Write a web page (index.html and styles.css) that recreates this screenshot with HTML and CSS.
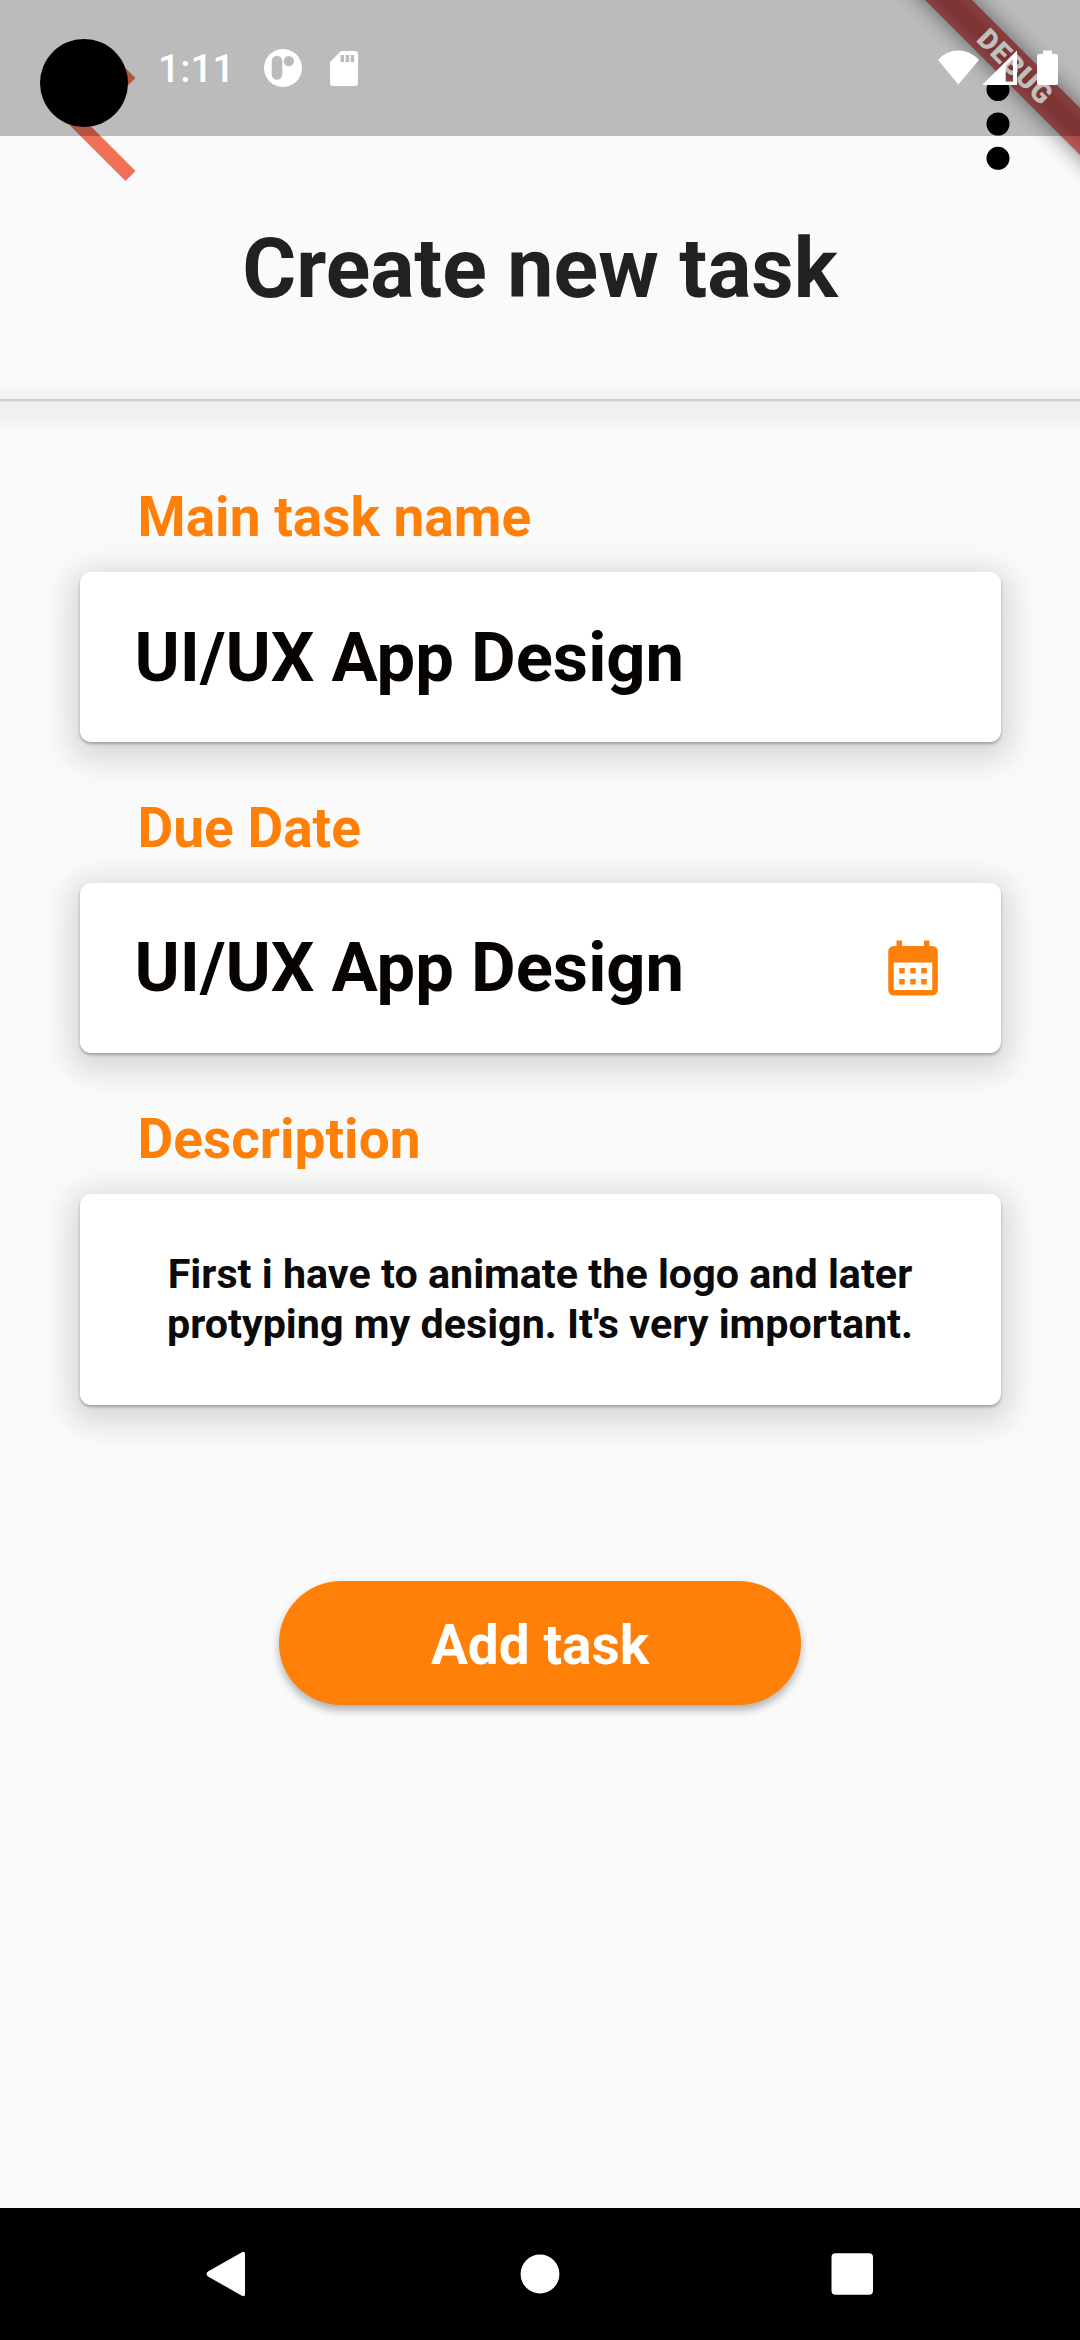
FILE: index.html
```html
<!DOCTYPE html>
<html lang="en">
<head>
<meta charset="utf-8">
<title>Create new task</title>
<link rel="stylesheet" href="styles.css">
</head>
<body>
<div class="screen">
  <header class="app-bar">
    <div class="app-bar-actions">
      <svg class="back" width="68" height="114" viewBox="0 0 68 114"><path d="M57.500 0 67.500 10 21 56.500 67.500 103 57.500 113 1 56.500z" fill="#ef7057"/></svg>
      <svg class="more" width="24" height="92" viewBox="0 0 24 92"><circle cx="12" cy="11.500" r="11.500"/><circle cx="12" cy="46" r="11.500"/><circle cx="12" cy="80.300" r="11.500"/></svg>
    </div>
    <h1 class="title"><span>Create new task</span></h1>
  </header>
  <div class="divider"></div>

  <main class="form">
    <label class="label"><span>Main task name</span></label>
    <div class="card field field-name"><span class="value">UI/UX App Design</span></div>
    <label class="label"><span>Due Date</span></label>
    <div class="card field">
      <span class="value">UI/UX App Design</span>
      <svg class="calendar" width="66" height="66" viewBox="0 0 24 24"><path fill="#ff8009" fill-rule="evenodd" d="M6 2h2v2h8V2h2v2h1a2 2 0 0 1 2 2v14a2 2 0 0 1-2 2H5a2 2 0 0 1-2-2V6a2 2 0 0 1 2-2h1zM5 10v10h14V10zM7 12h2v2H7zM11 12h2v2h-2zM15 12h2v2h-2zM7 16h2v2H7zM11 16h2v2h-2zM15 16h2v2h-2z"/></svg>
    </div>
    <label class="label"><span>Description</span></label>
    <div class="card note"><p>First i have to animate the logo and later<br>protyping my design. It's very important.</p></div>
    <button class="add"><span>Add task</span></button>
  </main>

  <nav class="nav-bar">
    <svg width="66" height="66" viewBox="0 0 66 66"><path d="M13 30.500 46.500 11.500Q50 9.500 50 13V53Q50 56.500 46.500 54.500L13 35.500Q10 33 13 30.500z"/></svg>
    <svg width="66" height="66" viewBox="0 0 66 66"><circle cx="33" cy="33" r="19.400"/></svg>
    <svg width="66" height="66" viewBox="0 0 66 66"><rect x="12.500" y="12.300" width="41.500" height="41.500" rx="4"/></svg>
  </nav>

  <svg class="banner" width="240" height="240" viewBox="0 0 240 240">
    <path class="banner-shadow" d="M25-60H72L300 168V215z"/>
    <path d="M85 0H132L240 108V155z" fill="#b71c1c" fill-opacity=".627"/>
    <text x="175.500" y="76.500" transform="rotate(45 175.500 66.500)" text-anchor="middle" class="banner-text">DEBUG</text>
  </svg>

  <div class="status-bar">
    <div class="status-left">
      <span class="camera"></span>
      <span class="time">1:11</span>
      <svg class="p-icon" width="40" height="40" viewBox="0 0 40 40"><path fill="#fff" fill-rule="evenodd" d="M20 1a19 19 0 1 0 0 38 19 19 0 1 0 0-38zM14 7.700a5.300 5.300 0 0 1 5.300 5.300V26.500a5.300 5.300 0 0 1-10.600 0V13A5.300 5.300 0 0 1 14 7.700zM25.800 7.900a5.200 5.200 0 1 1 0 10.400 5.200 5.200 0 1 1 0-10.400z"/></svg>
      <svg class="sd-icon" width="28" height="35" viewBox="0 0 28 35"><path fill="#fff" fill-rule="evenodd" d="M11 0H25Q28 0 28 3V32Q28 35 25 35H3Q0 35 0 32V11zM10.500 4v7h3.500V4zM15.700 4v7h3.500V4zM20.700 4v7h3.500V4z"/></svg>
    </div>
    <svg class="status-right" width="122" height="36" viewBox="0 0 122 36" fill="#fff"><path d="M0 10Q8 .5 20.300 .5T41 10L20.300 34.500z"/><path fill-rule="evenodd" d="M44 35 79 .5V35zM67.700 16V31.500H75V9z"/><path d="M105 .5h9V4h4a2 2 0 0 1 2 2V33a2 2 0 0 1-2 2H101a2 2 0 0 1-2-2V6a2 2 0 0 1 2-2h4z"/></svg>
  </div>
</div>
</body>
</html>
```
FILE: styles.css
```css
* { box-sizing: border-box; }
body { margin: 0; font-family: Roboto, "Liberation Sans", sans-serif; }
.screen {
  position: relative;
  width: 1080px;
  height: 2340px;
  display: flex;
  flex-direction: column;
  overflow: hidden;
  background: #fafafa;
}

.app-bar {
  height: 399px;
  padding-top: 68px;
}
.app-bar-actions {
  display: flex;
  justify-content: space-between;
  align-items: flex-start;
  height: 114px;
  padding: 0 70.5px 0 68px;
}
.more { margin-top: 10px; }
.title {
  margin: 38px 0 0;
  font-size: 82.5px;
  line-height: 97px;
  font-weight: 700;
  text-align: center;
  color: #212121;
}
.divider {
  height: 2px;
  margin: 0 -40px;
  background: #d1d1d1;
  box-shadow: 0 1px 1px rgba(0, 0, 0, .08), 0 7px 24px 8px rgba(0, 0, 0, .085);
}

.form {
  flex: 1;
  display: flex;
  flex-direction: column;
  padding: 84px 79.5px 0;
}
.label {
  padding-left: 58px;
  margin-bottom: 22.5px;
  font-size: 55px;
  line-height: 64px;
  font-weight: 700;
  color: #ff8009;
}
.card {
  border-radius: 11px;
  margin-bottom: 54px;
  background: #fff;
  box-shadow: 0 2px 3px rgba(0, 0, 0, .28), 0 8px 30px 9px rgba(44, 28, 28, .165);
}
.field {
  height: 170.5px;
  display: flex;
  align-items: center;
  justify-content: space-between;
  padding: 0 54.5px 0 55px;
}
.field-name { padding-top: 1.5px; }
.value {
  font-size: 68.75px;
  line-height: 80px;
  font-weight: 700;
  color: #060300;
}
.note {
  height: 211.5px;
  padding-top: 55px;
  text-align: center;
}
.note p {
  margin: 0;
  font-size: 41.25px;
  line-height: 50px;
  font-weight: 700;
  color: #0b0b0b;
}
.add {
  align-self: center;
  width: 522px;
  height: 124px;
  margin: 122px 0 0;
  padding: 4px 0 0;
  border: 0;
  border-radius: 62px;
  background: #ff8009;
  box-shadow: 0 5px 8px rgba(0, 0, 0, .3);
  font: 700 55px/64px Roboto, "Liberation Sans", sans-serif;
  color: #fff;
}

.nav-bar {
  height: 132px;
  display: flex;
  align-items: center;
  justify-content: space-between;
  padding: 0 195.5px 0 195px;
  background: #000;
  fill: #fff;
}

/* Overlays above the app content */
.banner { position: absolute; top: 0; right: 0; }
.banner-shadow { fill: #000; fill-opacity: .5; filter: blur(11px); }
.banner-text { font-size: 28px; font-weight: 900; letter-spacing: .8px; fill: #fff; }
.status-bar {
  position: absolute;
  top: 0;
  left: 0;
  width: 1080px;
  height: 136px;
  display: flex;
  justify-content: space-between;
  padding: 0 20px 0 40px;
  background: rgba(0, 0, 0, .25);
}
.status-left { display: flex; align-items: flex-start; }
.camera {
  width: 88px;
  height: 88px;
  margin-top: 39px;
  border-radius: 50%;
  background: #000;
}
.time {
  width: 76px;
  margin: 46px 0 0 30px;
  font-size: 39px;
  line-height: 46px;
  font-weight: 500;
  color: #fff;
}
.p-icon { margin: 48px 0 0 29px; }
.sd-icon { margin: 51px 0 0 27px; }
.status-right { margin-top: 50px; }
```
